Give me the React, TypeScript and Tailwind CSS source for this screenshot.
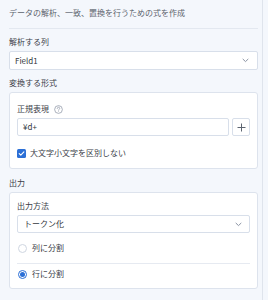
import React from "react";

const font = { fontFamily: '"Noto Sans CJK JP", "Noto Sans", sans-serif' };

function Chevron() {
  return (
    <svg width="7" height="5" viewBox="0 0 7 5" fill="none">
      <path d="M1 1.2 L3.5 3.6 L6 1.2" stroke="#8a93a3" strokeWidth="1" strokeLinecap="round" strokeLinejoin="round" />
    </svg>
  );
}

export default function App() {
  return (
    <div
      className="w-[268px] h-[300px] bg-[#f4f7fc] flex text-[8px] leading-[12px] text-[#3b4048] overflow-hidden"
      style={font}
    >
      <div className="w-[263px] border-r border-[#dfe4ec] pl-[9px] pr-[4px] flex flex-col">
        {/* header */}
        <div className="pt-[7px] pb-[9px] border-b border-[#e3e8f0] text-[#5c636d]">
          データの解析、一致、置換を行うための式を作成
        </div>

        {/* column select */}
        <div className="mt-[7px]">解析する列</div>
        <div className="mt-[3px] h-[19px] bg-white border border-[#d8dfea] rounded-[2px] flex items-center justify-between pl-[5px] pr-[8px]">
          <span className="text-[#333840]">Field1</span>
          <Chevron />
        </div>

        {/* format */}
        <div className="mt-[7px]">変換する形式</div>
        <div className="mt-[3px] bg-white border border-[#dde3ed] rounded-[3px] px-[7px] pt-[10px] pb-[9px] flex flex-col">
          <div className="flex items-center gap-[5px]">
            <span>正規表現</span>
            <svg width="9" height="9" viewBox="0 0 10 10" fill="none">
              <circle cx="5" cy="5" r="4.3" stroke="#8a93a3" strokeWidth="0.8" />
              <path d="M3.6 3.9 C3.6 2.9 4.3 2.5 5 2.5 C5.8 2.5 6.4 3 6.4 3.7 C6.4 4.6 5 4.7 5 5.8" stroke="#8a93a3" strokeWidth="0.8" strokeLinecap="round" />
              <circle cx="5" cy="7.4" r="0.5" fill="#8a93a3" />
            </svg>
          </div>
          <div className="mt-[3px] flex gap-[3px]">
            <div className="flex-1 h-[18px] border border-[#d8dfea] rounded-[2px] flex items-center pl-[5px] text-[#333840]">
              ¥d+
            </div>
            <div className="w-[18px] h-[18px] border border-[#d8dfea] rounded-[2px] flex items-center justify-center">
              <svg width="9" height="9" viewBox="0 0 9 9">
                <path d="M4.5 0.5 V8.5 M0.5 4.5 H8.5" stroke="#5c6470" strokeWidth="1" />
              </svg>
            </div>
          </div>
          <div className="mt-[11px] flex items-center gap-[4px]">
            <div className="w-[9px] h-[9px] rounded-[1.5px] bg-[#2b6fd6] flex items-center justify-center">
              <svg width="7" height="7" viewBox="0 0 7 7" fill="none">
                <path d="M1.2 3.6 L2.8 5.1 L5.9 1.8" stroke="white" strokeWidth="1.1" strokeLinecap="round" strokeLinejoin="round" />
              </svg>
            </div>
            <span>大文字小文字を区別しない</span>
          </div>
        </div>

        {/* output */}
        <div className="mt-[8px]">出力</div>
        <div className="mt-[3px] bg-white border border-[#dde3ed] rounded-[3px] px-[7px] pt-[7px] pb-[8px] flex flex-col">
          <div>出力方法</div>
          <div className="mt-[3px] h-[18px] border border-[#d8dfea] rounded-[2px] flex items-center justify-between pl-[6px] pr-[7px]">
            <span className="text-[#333840]">トークン化</span>
            <Chevron />
          </div>
          <div className="mt-[9px] flex items-center gap-[5px] pl-[1px] pb-[9px] border-b border-[#e6eaf1]">
            <div className="w-[9px] h-[9px] rounded-full border border-[#cfd6e1] bg-white" />
            <span>列に分割</span>
          </div>
          <div className="mt-[4px] flex items-center gap-[5px] pl-[1px]">
            <div className="w-[9px] h-[9px] rounded-full border border-[#2b6fd6] bg-white flex items-center justify-center">
              <div className="w-[5px] h-[5px] rounded-full bg-[#2b6fd6]" />
            </div>
            <span>行に分割</span>
          </div>
        </div>
      </div>
      <div className="flex-1" />
    </div>
  );
}
